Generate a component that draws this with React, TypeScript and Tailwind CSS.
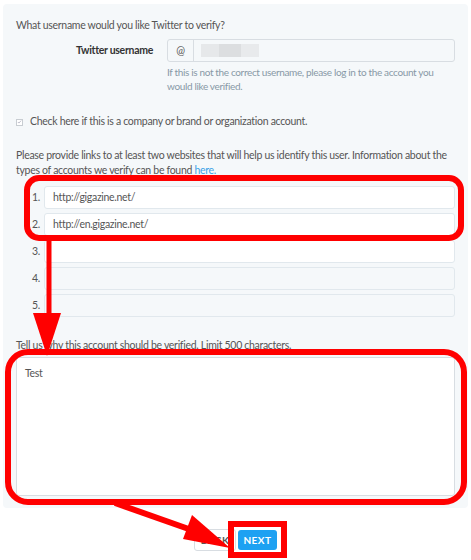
import React from 'react';

const font = { fontFamily: 'Lato, "Liberation Sans", sans-serif' };

// Red annotation marks drawn over the form
function Annotations() {
  return (
    <svg className="pointer-events-none absolute left-0 top-0" width="471" height="560" viewBox="0 0 471 560">
      <rect x="27" y="178" width="434" height="60" rx="12" fill="none" stroke="#ff0000" strokeWidth="6" />
      <line x1="49" y1="240" x2="49" y2="318" stroke="#ff0000" strokeWidth="5" />
      <polygon points="33,313 61,313 47,356" fill="#ff0000" />
      <rect x="8" y="352" width="456" height="150" rx="20" fill="none" stroke="#ff0000" strokeWidth="6" />
      <line x1="115" y1="503" x2="200" y2="533" stroke="#ff0000" strokeWidth="6" />
      <polygon points="192,515 183,539 230,548" fill="#ff0000" />
      <rect x="231" y="524" width="53" height="31" fill="none" stroke="#ff0000" strokeWidth="6" />
    </svg>
  );
}

export default function App() {
  const links = ['http://gigazine.net/', 'http://en.gigazine.net/', '', '', ''];

  return (
    <div className="relative h-[560px] w-[471px] overflow-hidden bg-white text-[10.5px] tracking-[-0.3px] text-[#555]" style={font}>
      <div className="px-[3px] pt-[4px]">
        <div className="rounded-[4px] bg-[#f5f8fa] px-[13px] pb-[12px] pt-[13px]">
          <p className="leading-[16px]">What username would you like Twitter to verify?</p>

          {/* Username row */}
          <div className="mt-[6px] flex items-center">
            <div className="w-[137px] text-right font-bold text-[#333]">Twitter username</div>
            <div className="ml-[14px] flex h-[23px] flex-1 overflow-hidden rounded-[3px] border border-[#d8dde2] bg-[#f5f8fa]">
              <div className="flex w-[26px] items-center justify-center border-r border-[#d8dde2] text-[#555]">@</div>
              <div className="flex flex-1 items-center pl-[7px]">
                <div className="flex h-[13px]">
                  <div className="w-[18px] bg-[#e6e8ea]" />
                  <div className="w-[22px] bg-[#dcdee0]" />
                  <div className="w-[18px] bg-[#e8eaec]" />
                </div>
              </div>
            </div>
          </div>
          <div className="ml-[151px] mt-[3px] text-[10px] leading-[14px] tracking-[-0.35px] text-[#8899a6]">
            <p>If this is not the correct username, please log in to the account you</p>
            <p>would like verified.</p>
          </div>

          {/* Company checkbox */}
          <div className="mt-[21px] flex h-[16px] items-center gap-[7px]">
            <div className="flex h-[7px] w-[7px] items-center justify-center border border-[#c8cdd2] bg-white">
              <svg width="6" height="6" viewBox="0 0 6 6"><path d="M1 3l1.3 1.3L5 1.3" stroke="#aab" strokeWidth="0.9" fill="none" /></svg>
            </div>
            <span>Check here if this is a company or brand or organization account.</span>
          </div>

          {/* Links */}
          <p className="mt-[18px] leading-[15px]">
            Please provide links to at least two websites that will help us identify this user. Information about the types of accounts we verify can be found{' '}
            <span className="text-[#3ba1e6]">here.</span>
          </p>
          <div className="mt-[8px] flex flex-col gap-[4px]">
            {links.map((url, i) => (
              <div key={i} className="flex items-center">
                <span className="w-[28px] pr-[4px] text-right">{i + 1}.</span>
                <div
                  className={`flex h-[23px] flex-1 items-center rounded-[3px] border border-[#e1e8ed] pl-[8px] ${i < 3 ? 'bg-white' : 'bg-[#f5f8fa]'}`}
                >
                  {url}
                </div>
              </div>
            ))}
          </div>

          {/* Reason */}
          <p className="mt-[20px] leading-[16px]">Tell us why this account should be verified. Limit 500 characters.</p>
          <div className="mt-[4px] h-[139px] rounded-[3px] border border-[#d8dde2] bg-white px-[8px] pt-[8px]">Test</div>
        </div>
      </div>

      {/* Buttons */}
      <div className="mt-[21px] flex items-center justify-center gap-[2px]">
        <button className="h-[22px] w-[42px] rounded-[3px] border border-[#d8dde2] bg-white text-[10px] font-bold tracking-[0.5px] text-[#555]">BACK</button>
        <button className="h-[20px] w-[39px] rounded-[3px] bg-[#1da1f2] text-[10px] font-bold tracking-[0.5px] text-white">NEXT</button>
      </div>

      <Annotations />
    </div>
  );
}
